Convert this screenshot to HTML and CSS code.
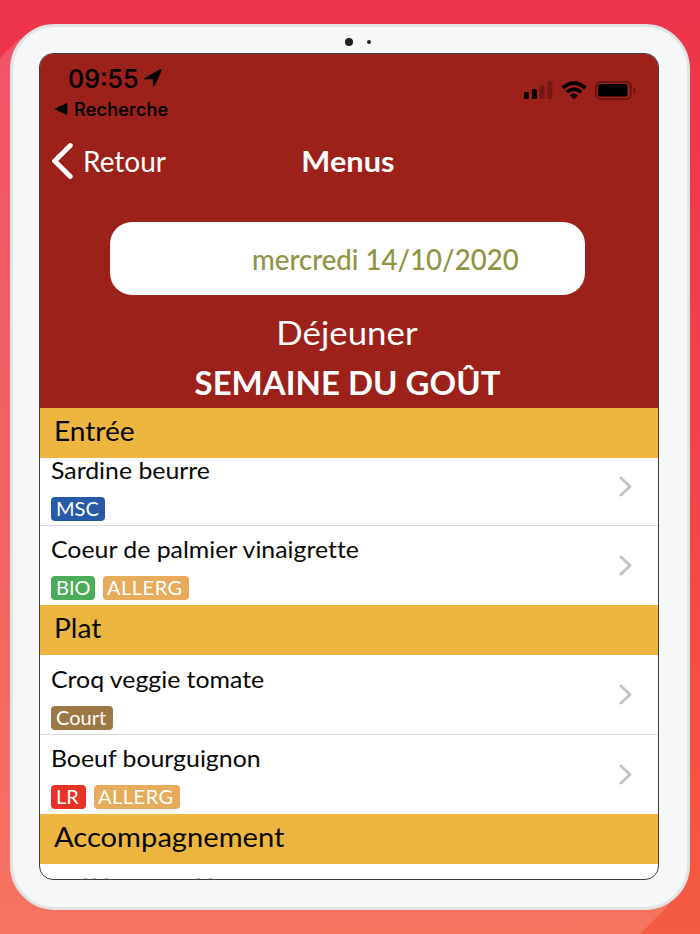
FILE: index.html
```html
<!DOCTYPE html>
<html lang="fr">
<head>
<meta charset="utf-8">
<title>Menus</title>
<link rel="stylesheet" href="styles.css">
</head>
<body>
<svg class="backdrop" viewBox="0 0 700 934" aria-hidden="true"><path d="M0 58 20 38 350 500 669 905 640 934H0Z" fill="#fff" fill-opacity=".16"/></svg>
<div class="tablet">
  <div class="camera"><i class="lens"></i><i class="sensor"></i></div>
  <main class="screen">
    <header class="head">
      <div class="status">
        <div class="status-left">
          <div class="clock"><span>09:55</span><svg width="18" height="18" viewBox="0 0 17 17"><path d="M.6 8.500 15.200.3q1.800-.3 1.300 1.300L10.200 15.900q-1.100 1.200-1.500-.3L8.300 9.500 1.100 9.800Q-.4 9.300.6 8.500Z"/></svg></div>
          <div class="origin"><svg width="13" height="12" viewBox="0 0 13 12"><path d="M.6 5.300 11.400.3q1-.3 1 .7v10q0 1-1 .7L.6 6.700q-1-.7 0-1.400Z"/></svg><span>Recherche</span></div>
        </div>
        <div class="status-right">
          <svg width="29" height="19" viewBox="0 0 29 19"><rect y="11" width="5" height="7" rx="1.500"/><rect x="8" y="8" width="5" height="10" rx="1.500"/><g opacity=".25"><rect x="15.500" y="4" width="5" height="14" rx="1.500"/><rect x="23.300" width="5" height="18" rx="1.500"/></g></svg>
          <svg width="26" height="19" viewBox="0 0 26 19"><g fill="none" stroke="#000" stroke-width="3.700"><path d="M1.700 7Q13-2.800 24.300 7"/><path d="M5.700 11.200Q13 5 20.300 11.200"/></g><path d="M13 18.300 9 14.200Q13 11 17 14.200Z"/></svg>
          <svg width="41" height="19" viewBox="0 0 41 19"><rect x=".9" y=".9" width="35" height="17" rx="4.500" fill="none" stroke="#5e1410" stroke-width="1.500"/><rect x="3" y="3" width="29.500" height="12.500" rx="2"/><path d="M38.500 6.200q2 1 2 3.200t-2 3.200Z" fill="#5e1410"/></svg>
        </div>
      </div>
      <nav class="nav">
        <a class="back"><svg width="21" height="36" viewBox="0 0 21 36"><path d="M18.300 2.500 2.700 18 18.300 33.500" fill="none" stroke="#fff" stroke-width="4.800" stroke-linecap="round" stroke-linejoin="miter"/></svg><span>Retour</span></a>
        <h1>Menus</h1>
      </nav>
      <div class="date"><span>mercredi 14/10/2020</span></div>
      <div class="meal"><span>Déjeuner</span></div>
      <div class="theme">SEMAINE DU GOÛT</div>
    </header>
    <h2><span>Entrée</span></h2>
    <section>
      <article class="row first"><div><p>Sardine beurre</p><div class="tags"><b class="msc">MSC</b></div></div><svg class="chev" viewBox="0 0 13 21"><path d="M2 2 11 10.500 2 19"/></svg></article>
      <article class="row"><div><p>Coeur de palmier vinaigrette</p><div class="tags"><b class="bio">BIO</b><b class="allerg">ALLERG</b></div></div><svg class="chev" viewBox="0 0 13 21"><path d="M2 2 11 10.500 2 19"/></svg></article>
    </section>
    <h2><span>Plat</span></h2>
    <section>
      <article class="row"><div><p>Croq veggie tomate</p><div class="tags"><b class="court">Court</b></div></div><svg class="chev" viewBox="0 0 13 21"><path d="M2 2 11 10.500 2 19"/></svg></article>
      <article class="row"><div><p>Boeuf bourguignon</p><div class="tags"><b class="lr">LR</b><b class="allerg">ALLERG</b></div></div><svg class="chev" viewBox="0 0 13 21"><path d="M2 2 11 10.500 2 19"/></svg></article>
    </section>
    <h2 class="wide"><span>Accompagnement</span></h2>
    <svg class="next" width="200" height="16" viewBox="0 0 200 16" aria-hidden="true"><path d="M44 15.200h3M53 15.200h3M65 15.200h3M157 15.200h3M169 15.200h3" stroke="#222" stroke-width="1"/></svg>
  </main>
</div>
</body>
</html>
```

FILE: styles.css
```css
* { box-sizing: border-box; margin: 0; padding: 0; }
body {
  width: 700px;
  height: 934px;
  overflow: hidden;
  padding: 24px 10px;
  font-family: Lato, "Open Sans", sans-serif;
  background: linear-gradient(178deg, #ed334b 0%, #ee374a 12%, #f14847 58%, #f45b42 100%);
}
.backdrop { position: absolute; left: 0; top: 0; width: 700px; height: 934px; }
.tablet {
  position: relative;
  width: 680px;
  height: 886px;
  padding: 0 26px;
  border: 3px solid #e1e3e5;
  border-radius: 45px;
  background: #f5f7f9;
}
.camera { height: 26px; display: flex; align-items: center; padding: 3px 0 0 305.500px; gap: 14px; }
.camera i { display: block; border-radius: 50%; background: #202224; }
.camera .lens { width: 8px; height: 8px; }
.camera .sensor { width: 4px; height: 4px; }
.screen {
  width: 620px;
  height: 827px;
  overflow: hidden;
  border: 1px solid #3d3d40;
  border-radius: 14px;
  background: #fff;
}
.head { height: 354px; background: #9b211a; color: #fff; white-space: nowrap; }
.status { display: flex; justify-content: space-between; height: 78px; color: #000; font-family: Inter, sans-serif; }
.status-left { padding: 10px 0 0 15px; }
.clock { display: flex; align-items: center; gap: 6px; height: 29px; padding-left: 13px; font-size: 25px; font-weight: 500; -webkit-text-stroke: .2px #000; }
.clock svg { margin-top: -1px; }
.origin { display: flex; align-items: center; gap: 6px; height: 32px; font-size: 18px; font-weight: 500; letter-spacing: .25px; -webkit-text-stroke: .2px #000; }
.status-right { display: flex; gap: 8px; padding: 27px 22px 0 0; }
.nav { display: grid; grid-template-columns: 1fr auto 1fr; align-items: center; height: 58px; padding: 0 14px 0 12px; }
.back { display: flex; align-items: center; gap: 10px; font-size: 28px; }
h1 { margin-top: -2px; font-size: 29px; font-weight: 700; transform: scaleX(1.06); }
.date {
  width: 475px;
  height: 73px;
  margin: 32px auto 0 70px;
  padding-left: 142px;
  border-radius: 22px;
  background: #fff;
  color: #8f9444;
  font-size: 28px;
  font-weight: 500;
  line-height: 74px;
}
.date span, h2 span { display: inline-block; transform-origin: left; }
.date span { transform: scaleX(.985); }
.meal { height: 52px; margin-top: 11px; padding-right: 4px; text-align: center; font-size: 33px; line-height: 52px; }
.meal span { display: inline-block; transform: scaleX(1.055); }
.theme { height: 50px; padding-right: 3px; text-align: center; font-size: 33px; font-weight: 700; line-height: 48px; }
h2 { height: 50px; padding-left: 14px; background: #ecb640; color: #080808; font-size: 26px; font-weight: 400; line-height: 47px; }
h2 span { transform: scaleX(1.08); }
h2.wide span { transform: scaleX(1.12); }
.row { display: flex; justify-content: space-between; height: 79.500px; padding: 12px 26px 0 11px; border-top: 1px solid #dadadc; }
.row:first-child { border-top-color: transparent; }
.row.first { height: 67px; padding-top: 0; }
.row p { width: max-content; height: 26px; color: #080808; font-size: 23px; line-height: 23px; white-space: nowrap; font-variant-ligatures: none; transform: scaleX(1.08); transform-origin: left; }
.tags { display: flex; gap: 8px; margin-top: 12px; }
.tags b { height: 24px; padding-left: 5px; border-radius: 4px; color: #fff; font-size: 20px; font-weight: 400; line-height: 23px; white-space: nowrap; }
.msc { width: 54px; background: #285ba7; }
.bio { width: 44px; background: #4bad57; }
.tags .allerg { width: 86px; padding-left: 4px; background: #e6ac5b; letter-spacing: .5px; }
.court { width: 62px; background: #9d7847; }
.lr { width: 35px; background: #e93227; }
.chev { width: 13px; height: 21px; margin-top: 16.500px; fill: none; stroke: #c3c3c5; stroke-width: 3; stroke-linecap: round; stroke-linejoin: round; }
.next { display: block; }
```
